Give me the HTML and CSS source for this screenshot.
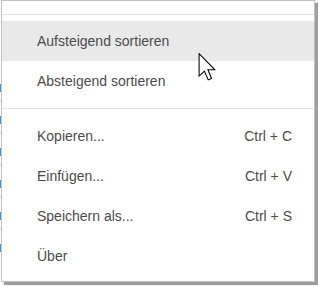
FILE: index.html
```html
<!DOCTYPE html>
<html lang="de">
<head>
    <meta charset="UTF-8">
    <title>Kontextmenü</title>
    <link rel="stylesheet" href="styles.css">
</head>
<body>
    <div class="menu">
        <div class="menu-head"></div>
        <ul class="group">
            <li class="item active">Aufsteigend sortieren</li>
            <li class="item">Absteigend sortieren</li>
        </ul>
        <ul class="group">
            <li class="item"><span>Kopieren...</span><span class="key">Ctrl + C</span></li>
            <li class="item"><span>Einfügen...</span><span class="key">Ctrl + V</span></li>
            <li class="item"><span>Speichern als...</span><span class="key">Ctrl + S</span></li>
            <li class="item"><span>Über</span></li>
        </ul>
    </div>

    <svg class="cursor" width="19" height="28" viewBox="0 0 13 20">
        <path d="M0.5 0.5 L0.5 16.5 L4.3 12.9 L7 19.2 L9.4 18.2 L6.8 12 L11.8 12 Z" fill="#fff" stroke="#000" stroke-width="0.75" stroke-linejoin="miter"/>
    </svg>
</body>
</html>
```

FILE: styles.css
```css
body {
    margin: 0;
    width: 318px;
    height: 286px;
    overflow: hidden;
    position: relative;
    font-family: 'Liberation Sans', Arial, sans-serif;
    background-color: #fff;
    background-image: repeating-linear-gradient(to bottom, #4a8fe0 0 8px, transparent 8px 16px, #c4c4c4 16px 17px, transparent 17px 32px);
    background-size: 2px 172px;
    background-position: 0 84px;
    background-repeat: no-repeat;
}

.menu {
    margin-left: 1px;
    width: 312px;
    background: #fff;
    border: 1px solid #c2c2c2;
    box-shadow: 3px 3px 1px rgba(0, 0, 0, 0.38);
}

.menu-head {
    height: 13px;
    border-bottom: 1px solid #e2e2e2;
}

.group {
    list-style: none;
    margin: 0;
    padding: 6px 0 7px;
    border-bottom: 1px solid #e2e2e2;
}

.group:last-child {
    padding: 7px 0 5px;
    border-bottom: none;
}

.item {
    height: 40px;
    display: flex;
    align-items: center;
    justify-content: space-between;
    padding: 0 22px 0 35px;
    font-size: 14px;
    color: #4b4b4b;
}

.item.active {
    background: #e9e9e9;
}

.cursor {
    position: absolute;
    left: 198px;
    top: 53px;
}
```
